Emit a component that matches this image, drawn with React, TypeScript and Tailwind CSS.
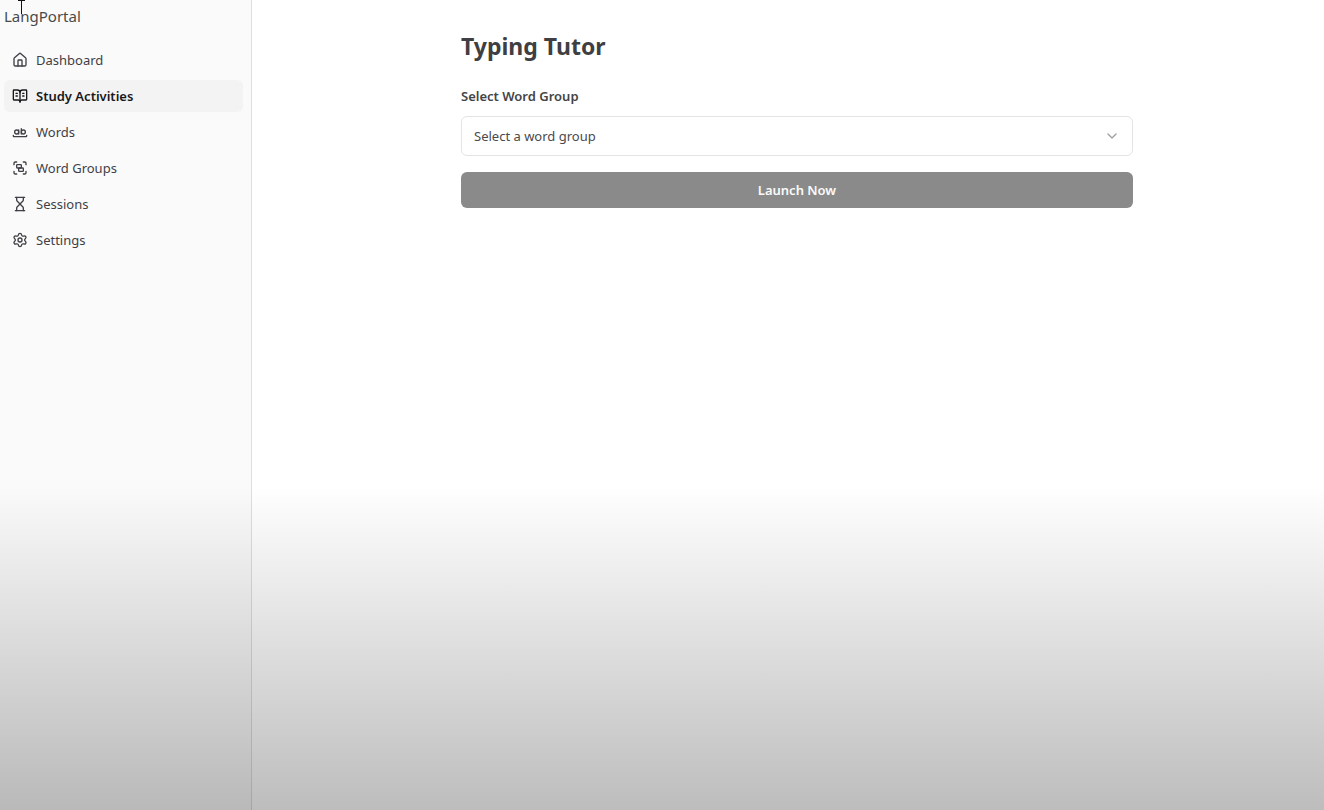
import { BookOpenText, ChevronDown, Group, Hourglass, House, Settings, WholeWord } from 'lucide-react';
import type { LucideIcon } from 'lucide-react';

type NavItem = { label: string; icon: LucideIcon; active?: boolean };

const navItems: NavItem[] = [
  { label: 'Dashboard', icon: House },
  { label: 'Study Activities', icon: BookOpenText, active: true },
  { label: 'Words', icon: WholeWord },
  { label: 'Word Groups', icon: Group },
  { label: 'Sessions', icon: Hourglass },
  { label: 'Settings', icon: Settings },
];

function Sidebar() {
  return (
    <aside className="w-[252px] shrink-0 border-r border-[#dedede] bg-[#fafafa] pl-1 pr-2">
      <div className="flex h-8 items-center text-[15px] text-[#4a4a4a]">LangPortal</div>
      <nav aria-label="Main" className="mt-3">
        <ul className="flex flex-col gap-1">
          {navItems.map(({ label, icon: Icon, active }) => (
            <li key={label}>
              <a
                href="#"
                aria-current={active ? 'page' : undefined}
                className={
                  active
                    ? 'flex h-8 items-center gap-2 rounded-md bg-[#f3f3f3] px-2 font-semibold text-[#18181b]'
                    : 'flex h-8 items-center gap-2 rounded-md px-2 text-[#3f3f46]'
                }
              >
                <Icon className="size-4 shrink-0" />
                <span>{label}</span>
              </a>
            </li>
          ))}
        </ul>
      </nav>
    </aside>
  );
}

function LaunchForm() {
  return (
    <form className="mx-auto max-w-2xl" onSubmit={(event) => event.preventDefault()}>
      <h1 className="text-[23px] leading-8 font-bold text-[#3f3f43]">Typing Tutor</h1>
      <label htmlFor="word-group" className="mt-6 block leading-5 font-semibold text-[#444446]">
        Select Word Group
      </label>
      <div className="relative mt-2.5">
        <select
          id="word-group"
          defaultValue=""
          className="h-10 w-full appearance-none rounded-md border border-[#e4e4e7] bg-white px-3 text-[#4a4a4d]"
        >
          <option value="">Select a word group</option>
        </select>
        <ChevronDown className="pointer-events-none absolute top-3 right-[13px] size-4 text-[#a0a0a0]" />
      </div>
      <button type="submit" className="mt-4 h-9 w-full rounded-md bg-[#8a8a8a] font-semibold text-[#fafafa]">
        Launch Now
      </button>
    </form>
  );
}

export default function App() {
  return (
    <div className="relative flex min-h-screen bg-white font-['Noto_Sans','Open_Sans',sans-serif] text-[13px] leading-5">
      <Sidebar />
      <main className="min-w-0 flex-1 pt-[30px] pl-[18px]">
        <LaunchForm />
      </main>
      <div className="pointer-events-none absolute inset-x-0 bottom-0 h-2/5 bg-linear-to-b from-black/0 to-black/26" />
      <svg
        aria-hidden="true"
        className="pointer-events-none absolute top-0 left-[18px] h-4 w-2"
        viewBox="0 0 8 16"
        fill="none"
        stroke="#111111"
        shapeRendering="crispEdges"
      >
        <path d="M0 .5h3M4 .5h3M3.5 0v14" />
      </svg>
    </div>
  );
}
